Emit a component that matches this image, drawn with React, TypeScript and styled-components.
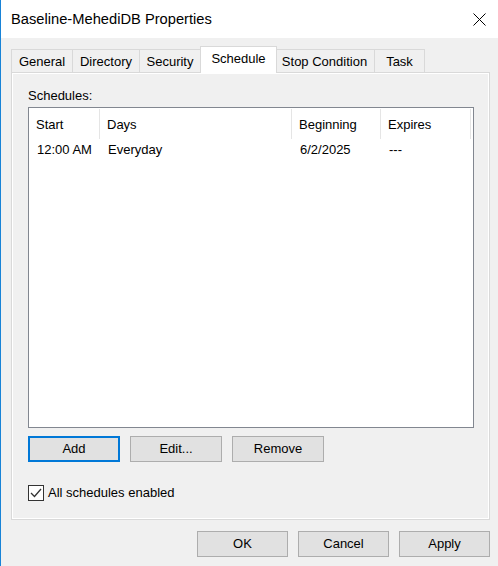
import React from 'react'
import styled, { createGlobalStyle } from 'styled-components'

const GlobalStyle = createGlobalStyle`
  html, body {
    margin: 0;
    padding: 0;
    background: #f0f0f0;
  }
  * {
    box-sizing: border-box;
  }
`

const tabs = [
  { label: 'General', width: 62 },
  { label: 'Directory', width: 68 },
  { label: 'Security', width: 62 },
  { label: 'Schedule', width: 77, active: true },
  { label: 'Stop Condition', width: 101 },
  { label: 'Task', width: 51 },
]

const columns = [
  { label: 'Start', width: 71 },
  { label: 'Days', width: 192 },
  { label: 'Beginning', width: 89 },
  { label: 'Expires', width: 90 },
]

const rows = [['12:00 AM', 'Everyday', '6/2/2025', '---']]

const App = () => {
  return (
    <Window>
      <GlobalStyle />
      <TitleBar>
        <Title>Baseline-MehediDB Properties</Title>
        <CloseButton>
          <svg width="13" height="13" viewBox="0 0 13 13">
            <path d="M0.5 0.5 L12.5 12.5 M12.5 0.5 L0.5 12.5" stroke="#000" strokeWidth="1" />
          </svg>
        </CloseButton>
      </TitleBar>
      <Body>
        <TabStrip>
          {tabs.map((tab, i) => (
            <Tab key={tab.label} $active={!!tab.active} $width={tab.width} $afterActive={i > 0 && !!tabs[i - 1].active}>
              {tab.label}
            </Tab>
          ))}
        </TabStrip>
        <Panel>
          <Label>Schedules:</Label>
          <ListBox>
            <HeaderRow>
              {columns.map((col) => (
                <HeaderCell key={col.label} $width={col.width}>
                  {col.label}
                </HeaderCell>
              ))}
            </HeaderRow>
            {rows.map((row, r) => (
              <Row key={r}>
                {row.map((cell, c) => (
                  <Cell key={c} $width={columns[c].width}>
                    {cell}
                  </Cell>
                ))}
              </Row>
            ))}
          </ListBox>
          <ButtonRow>
            <Button $default>Add</Button>
            <Button>Edit...</Button>
            <Button>Remove</Button>
          </ButtonRow>
          <CheckRow>
            <CheckBox>
              <svg width="14" height="14" viewBox="0 0 14 14">
                <path d="M2 7 L5.5 10.5 L12 3" fill="none" stroke="#333" strokeWidth="1.3" />
              </svg>
            </CheckBox>
            <CheckLabel>All schedules enabled</CheckLabel>
          </CheckRow>
        </Panel>
        <Footer>
          <Button $width={91}>OK</Button>
          <Button $width={91}>Cancel</Button>
          <Button $width={91}>Apply</Button>
        </Footer>
      </Body>
    </Window>
  )
}

const Window = styled.div`
  width: 498px;
  height: 566px;
  border-left: 1px solid #1883d7;
  background: #f0f0f0;
  font-family: 'Liberation Sans', Arial, sans-serif;
  font-size: 13px;
  color: #000;
  overflow: hidden;
`

const TitleBar = styled.div`
  height: 38px;
  background: #ffffff;
  display: flex;
  align-items: center;
  justify-content: space-between;
  padding: 0 12px 0 10px;
`

const Title = styled.div`
  font-size: 14.7px;
  line-height: 18px;
`

const CloseButton = styled.div`
  width: 13px;
  height: 13px;
  display: flex;
`

const Body = styled.div`
  padding: 8px 8px 0 10px;
`

const TabStrip = styled.div`
  display: flex;
  align-items: flex-end;
  height: 27px;
  margin-bottom: -1px;
  position: relative;
  z-index: 1;
`

const Tab = styled.div<{ $active: boolean; $width: number; $afterActive: boolean }>`
  width: ${(p) => p.$width}px;
  height: ${(p) => (p.$active ? 27 : 23)}px;
  margin-bottom: ${(p) => (p.$active ? 0 : 1)}px;
  margin-left: ${(p) => (p.$afterActive ? -3 : -1)}px;
  &:first-child {
    margin-left: 0;
  }
  display: flex;
  align-items: center;
  justify-content: center;
  padding: ${(p) => (p.$active ? '0 0 3px' : '2px 0 0')};
  border: 1px solid #d9d9d9;
  border-bottom: none;
  background: ${(p) => (p.$active ? '#ffffff' : '#f0f0f0')};
  position: relative;
  z-index: ${(p) => (p.$active ? 2 : 1)};
  white-space: nowrap;
  line-height: 16px;
`

const Panel = styled.div`
  width: 479px;
  height: 448px;
  border: 1px solid #d9d9d9;
  box-shadow: inset 0 0 0 1px #ffffff;
  background: #f0f0f0;
  padding: 15px 15px 0 16px;
  display: flex;
  flex-direction: column;
`

const Label = styled.div`
  height: 16px;
  line-height: 16px;
  margin-bottom: 3px;
`

const ListBox = styled.div`
  width: 446px;
  height: 321px;
  border: 1px solid #828790;
  background: #ffffff;
`

const HeaderRow = styled.div`
  display: flex;
  height: 31px;
`

const HeaderCell = styled.div<{ $width: number }>`
  width: ${(p) => p.$width}px;
  padding-left: 7px;
  display: flex;
  align-items: center;
  border-right: 1px solid #e5e5e5;
  margin-top: 1px;
`

const Row = styled.div`
  display: flex;
  height: 21px;
`

const Cell = styled.div<{ $width: number }>`
  width: ${(p) => p.$width}px;
  padding-left: 8px;
  display: flex;
  align-items: center;
`

const ButtonRow = styled.div`
  display: flex;
  gap: 10px;
  margin-top: 8px;
`

const Button = styled.div<{ $default?: boolean; $width?: number }>`
  width: ${(p) => p.$width ?? 92}px;
  height: 26px;
  background: #e1e1e1;
  border: ${(p) => (p.$default ? '2px solid #0078d7' : '1px solid #adadad')};
  display: flex;
  align-items: center;
  justify-content: center;
  line-height: 16px;
`

const CheckRow = styled.div`
  display: flex;
  align-items: center;
  gap: 4px;
  margin-top: 23px;
  height: 16px;
`

const CheckBox = styled.div`
  width: 16px;
  height: 16px;
  border: 1px solid #333333;
  background: #ffffff;
  display: flex;
  align-items: center;
  justify-content: center;
`

const CheckLabel = styled.div`
  line-height: 16px;
`

const Footer = styled.div`
  display: flex;
  justify-content: flex-end;
  gap: 10px;
  margin-top: 11px;
`

export default App
